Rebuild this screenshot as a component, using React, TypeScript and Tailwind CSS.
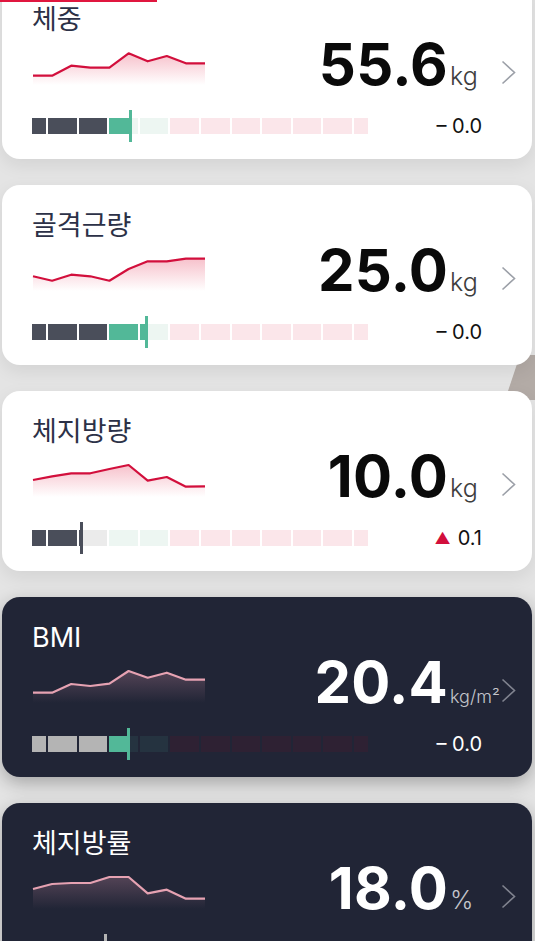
import React from 'react';

type Metric = {
  title: string;
  value: string;
  unit: string;
  unitSize: 'lg' | 'sm';
  delta: string;
  up?: boolean;
  dark?: boolean;
  points: number[];
  fill: number;
};

const metrics: Metric[] = [
  { title: '체중', value: '55.6', unit: 'kg', unitSize: 'lg', delta: '– 0.0', points: [26.7, 26.7, 16.7, 18.7, 18.7, 4.3, 12.3, 7, 14.3, 14.3], fill: 97 },
  { title: '골격근량', value: '25.0', unit: 'kg', unitSize: 'lg', delta: '– 0.0', points: [21.3, 25.7, 19.7, 21.3, 25.7, 14, 6.3, 6.3, 3.7, 3.7], fill: 113 },
  { title: '체지방량', value: '10.0', unit: 'kg', unitSize: 'lg', delta: '0.1', up: true, points: [19, 15.3, 12.3, 12.3, 8, 4, 19.7, 16, 25.7, 25.3], fill: 48 },
  { title: 'BMI', value: '20.4', unit: 'kg/m²', unitSize: 'sm', delta: '– 0.0', dark: true, points: [25.7, 25.7, 17, 19, 16.7, 4, 10.7, 5.7, 12.7, 12.7], fill: 95 },
  { title: '체지방률', value: '18.0', unit: '%', unitSize: 'lg', delta: '– 0.0', dark: true, points: [16, 11, 10, 10, 4, 4, 20.3, 16.7, 25.7, 25.7], fill: 72 },
];

// 12 segments: half, 10 full, half. 0-2 under, 3-4 normal, rest over
const SEGMENTS = Array.from({ length: 12 }, (_, i) => i);
const zoneOf = (i: number) => (i < 3 ? 'under' : i < 5 ? 'normal' : 'over');

const palette = {
  light: {
    under: ['bg-[#4a4e5a]', 'bg-[#ebebeb]'],
    normal: ['bg-[#52b898]', 'bg-[#edf6f2]'],
    over: ['bg-[#d20f3c]', 'bg-[#fbe6ea]'],
  },
  dark: {
    under: ['bg-[#b4b4b4]', 'bg-[#3a3d4a]'],
    normal: ['bg-[#52b898]', 'bg-[#253340]'],
    over: ['bg-[#c9375a]', 'bg-[#2e2133]'],
  },
};

function Segments({ dark, filled }: { dark?: boolean; filled: boolean }) {
  const p = dark ? palette.dark : palette.light;
  return (
    <div className="flex h-full w-[336px] gap-[2px]">
      {SEGMENTS.map((i) => (
        <div
          key={i}
          className={`h-full ${i === 0 || i === 11 ? 'flex-1' : 'flex-2'} ${p[zoneOf(i)][filled ? 0 : 1]}`}
        />
      ))}
    </div>
  );
}

function RangeBar({ dark, fill }: { dark?: boolean; fill: number }) {
  const zone = fill < 77 ? 'under' : fill < 138 ? 'normal' : 'over';
  const marker = (dark ? palette.dark : palette.light)[zone][0];
  return (
    <div className="relative h-4 w-[336px] shrink-0">
      <Segments dark={dark} filled={false} />
      <div className="absolute inset-y-0 left-0 overflow-hidden" style={{ width: fill }}>
        <Segments dark={dark} filled />
      </div>
      <div className={`absolute -top-2 h-8 w-[3px] ${marker}`} style={{ left: fill }} />
    </div>
  );
}

function Sparkline({ points, dark, id }: { points: number[]; dark?: boolean; id: string }) {
  const step = 172 / (points.length - 1);
  const pts = points.map((y, i) => `${(1 + i * step).toFixed(1)},${y}`);
  const line = `M${pts.join(' L')}`;
  const area = `${line} L173,36 L1,36 Z`;
  const stroke = dark ? '#e6a2b2' : '#d20f3c';
  const fillColor = dark ? '#c98aa0' : '#e8536f';
  return (
    <svg width="174" height="36" viewBox="0 0 174 36" className="shrink-0">
      <defs>
        <linearGradient id={id} x1="0" y1="0" x2="0" y2="1">
          <stop offset="0" stopColor={fillColor} stopOpacity={dark ? 0.3 : 0.36} />
          <stop offset="1" stopColor={fillColor} stopOpacity="0" />
        </linearGradient>
      </defs>
      <path d={area} fill={`url(#${id})`} />
      <path d={line} fill="none" stroke={stroke} strokeWidth="2.2" strokeLinejoin="round" />
    </svg>
  );
}

function MetricCard({ m, idx }: { m: Metric; idx: number }) {
  const dark = m.dark;
  return (
    <div
      className={`relative z-10 flex h-[180px] shrink-0 flex-col rounded-[18px] pl-[30px] pr-[15px] pt-[25px] ${
        dark
          ? 'bg-[#212536] shadow-[0_6px_18px_rgba(0,0,0,0.28)]'
          : 'bg-white shadow-[0_6px_18px_rgba(0,0,0,0.08)]'
      }`}
    >
      <div className={`text-[27px] leading-[32px] ${dark ? 'text-white' : 'text-[#2c3147]'}`}>{m.title}</div>
      <div className="flex items-baseline">
        <Sparkline points={m.points} dark={dark} id={`spark-${idx}`} />
        <div className="ml-auto flex items-baseline">
          <span
            className={`text-[58px] leading-[56px] font-bold tracking-[0.25px] ${dark ? 'text-white' : 'text-[#0a0a0a]'}`}
          >
            {m.value}
          </span>
          <span
            className={`ml-[2px] w-[50px] font-light leading-none ${
              m.unitSize === 'sm' ? 'text-[18px]' : 'text-[25px]'
            } ${dark ? 'text-[#c4c5cc]' : 'text-[#3d3d3d]'}`}
          >
            {m.unit}
          </span>
          <svg width="17" height="25" viewBox="0 0 17 25" className="mb-[3px]">
            <path
              d="M2.5 1.5 L14.5 12.5 L2.5 23.5"
              fill="none"
              stroke={dark ? '#80838f' : '#9ca0a8'}
              strokeWidth="1.6"
            />
          </svg>
        </div>
      </div>
      <div className="mt-[18px] flex h-8 items-center">
        <RangeBar dark={dark} fill={m.fill} />
        <div
          className={`flex flex-1 items-center justify-end gap-[7px] pr-[35px] text-[20px] leading-none ${
            dark ? 'text-white' : 'text-[#111111]'
          }`}
        >
          {m.up && <span className="text-[16px] leading-none text-[#d20f3c]">▲</span>}
          <span>{m.delta}</span>
        </div>
      </div>
    </div>
  );
}

export default function App() {
  return (
    <div className="relative h-[941px] w-[535px] overflow-hidden bg-[#e4e4e4] font-['Inter','Noto_Sans_CJK_KR',sans-serif]">
      <div className="absolute left-0 top-0 z-20 h-[2px] w-[157px] bg-[#e0163f]" />
      <div className="absolute left-[500px] top-[355px] z-0 h-[45px] w-[35px] bg-[#b3aba6] [clip-path:polygon(20px_0,100%_0,100%_100%,5px_100%)]" />
      <div className="-mt-[21px] flex flex-col gap-[26px] pl-[2px] pr-[3px]">
        {metrics.map((m, i) => (
          <MetricCard key={m.title} m={m} idx={i} />
        ))}
      </div>
    </div>
  );
}
